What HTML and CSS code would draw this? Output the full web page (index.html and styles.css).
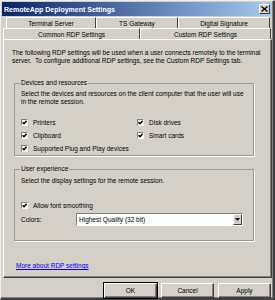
FILE: index.html
```html
<!DOCTYPE html>
<html>
<head>
<meta charset="utf-8">
<link rel="stylesheet" href="styles.css">
</head>
<body>
<div class="window">
  <div class="titlebar">
    <span class="title">RemoteApp Deployment Settings</span>
    <span class="close"><svg width="7" height="6" viewBox="0 0 7 6"><path d="M0.5 0.5 L6.5 5.5 M6.5 0.5 L0.5 5.5" stroke="#000" stroke-width="1.3"/></svg></span>
  </div>
  <div class="tabs">
    <div class="tabrow back">
      <div class="tab t1">Terminal Server</div>
      <div class="tab t2">TS Gateway</div>
      <div class="tab t3">Digital Signature</div>
    </div>
    <div class="tabrow front">
      <div class="tab t4 selected">Common RDP Settings</div>
      <div class="tab t5">Custom RDP Settings</div>
    </div>
  </div>
  <div class="panel">
    <p class="desc">The following RDP settings will be used when a user connects remotely to the terminal server.&nbsp; To configure additional RDP settings, see the Custom RDP Settings tab.</p>
    <fieldset class="group g1">
      <legend>Devices and resources</legend>
      <p class="gtext">Select the devices and resources on the client computer that the user will use in the remote session.</p>
      <div class="checks">
        <div class="col">
          <div class="check"><span class="box"></span>Printers</div>
          <div class="check"><span class="box"></span>Clipboard</div>
          <div class="check"><span class="box"></span>Supported Plug and Play devices</div>
        </div>
        <div class="col c2">
          <div class="check"><span class="box"></span>Disk drives</div>
          <div class="check"><span class="box"></span>Smart cards</div>
        </div>
      </div>
    </fieldset>
    <fieldset class="group g2">
      <legend>User experience</legend>
      <p class="gtext">Select the display settings for the remote session.</p>
      <div class="check smooth"><span class="box"></span>Allow font smoothing</div>
      <div class="colors">
        <span class="clabel">Colors:</span>
        <div class="select"><span class="sval">Highest Quality (32 bit)</span><span class="arrow"><svg width="5" height="3" viewBox="0 0 5 3"><path d="M0 0 H5 L2.5 3 Z" fill="#000"/></svg></span></div>
      </div>
    </fieldset>
    <a class="link" href="#">More about RDP settings</a>
  </div>
  <div class="buttons">
    <div class="btn">OK</div>
    <div class="btn">Cancel</div>
    <div class="btn">Apply</div>
  </div>
</div>
</body>
</html>
```
FILE: styles.css
```css
html, body { margin: 0; padding: 0; }
body {
  width: 275px; height: 300px; overflow: hidden;
  background: #d4d0c8;
  font-family: "Liberation Sans", Arial, sans-serif;
  font-size: 6.5px;
  color: #000;
}
.window {
  box-sizing: border-box;
  width: 275px; height: 300px;
  background: #d4d0c8;
  border-top: 1px solid #eeeeee;
  border-left: 1px solid #eeeeee;
  border-right: 2px solid #404040;
  border-bottom: 2px solid #404040;
  box-shadow: inset -1px -1px 0 #808080;
  display: flex; flex-direction: column;
}
.titlebar {
  height: 14px;
  margin: 1px 1px 0 1px;
  background: linear-gradient(to right, #0a246a, #a6caf0);
  display: flex; align-items: center; justify-content: space-between;
  padding: 0 2px 0 2px;
}
.title { color: #fff; font-weight: bold; font-size: 7px; }
.close {
  box-sizing: border-box;
  width: 11px; height: 10px;
  background: #d4d0c8;
  border-top: 1px solid #fff; border-left: 1px solid #fff;
  border-right: 1px solid #404040; border-bottom: 1px solid #404040;
  display: flex; align-items: center; justify-content: center;
}
.tabs { display: flex; flex-direction: column; margin-top: 1px; }
.tabrow { display: flex; height: 11px; }
.tabrow.back { margin-left: 5px; }
.tabrow.front { margin-left: 2px; }
.tab {
  box-sizing: border-box;
  border-top: 1px solid #fff; border-left: 1px solid #fff;
  border-right: 1px solid #404040;
  display: flex; align-items: center; justify-content: center;
}
.t1 { width: 90px; } .t2 { width: 82px; } .t3 { width: 92px; }
.t4 { width: 137px; } .t5 { width: 131px; }
.panel {
  box-sizing: border-box;
  width: 269px; height: 239px;
  margin-left: 2px;
  border-top: 1px solid #fff; border-left: 1px solid #fff;
  border-right: 1px solid #404040; border-bottom: 1px solid #404040;
  box-shadow: inset -1px -1px 0 #808080;
  padding: 9px 0 0 8px;
  display: flex; flex-direction: column;
}
p { margin: 0; }
.desc { line-height: 8px; width: 252px; }
.group {
  margin: 14px 0 0 2px; padding: 0 0 0 6px;
  width: 240px; box-sizing: border-box;
  border: 1px solid #9c9a94;
  box-shadow: 1px 1px 0 #fff;
  min-inline-size: 0;
}
.group legend { padding: 0 1px; margin-left: -1px; line-height: 8px; }
.gtext { line-height: 8px; margin-top: 3px; width: 228px; }
.g1 { height: 77px; }
.checks { display: flex; margin-top: 12px; }
.col { display: flex; flex-direction: column; gap: 5px; width: 122px; }
.check { display: flex; align-items: center; height: 8px; }
.box {
  box-sizing: border-box;
  width: 7px; height: 7px; margin-right: 5px;
  background: #fff url("data:image/svg+xml;utf8,<svg xmlns='http://www.w3.org/2000/svg' width='5' height='5' viewBox='0 0 5 5'><path d='M0.5 2.2 L2 3.8 L4.6 0.8' stroke='black' stroke-width='1.4' fill='none'/></svg>") center/5px 5px no-repeat;
  border-top: 1px solid #808080; border-left: 1px solid #808080;
  border-right: 1px solid #fff; border-bottom: 1px solid #fff;
}
.g2 { margin-top: 9px; height: 76px; }
.g2 .gtext { margin-top: 4px; }
.smooth { margin-top: 16px; }
.colors { display: flex; align-items: center; margin-top: 4px; }
.clabel { width: 55px; }
.select {
  box-sizing: border-box;
  width: 167px; height: 13px;
  background: #fff;
  border-top: 1px solid #808080; border-left: 1px solid #808080;
  border-right: 1px solid #fff; border-bottom: 1px solid #fff;
  display: flex; align-items: center; justify-content: space-between;
  padding-left: 2px;
}
.arrow {
  box-sizing: border-box; width: 9px; height: 11px;
  background: #d4d0c8;
  border-top: 1px solid #fff; border-left: 1px solid #fff;
  border-right: 1px solid #404040; border-bottom: 1px solid #404040;
  display: flex; align-items: center; justify-content: center;
}
.link { color: #0000ee; text-decoration: underline; margin: 21px 0 0 4px; }
.buttons { display: flex; justify-content: flex-end; gap: 4px; margin: 5px 2px 0 0; }
.btn {
  box-sizing: border-box; width: 53px; height: 15px;
  border-top: 1px solid #fff; border-left: 1px solid #fff;
  border-right: 1px solid #404040; border-bottom: 1px solid #404040;
  box-shadow: inset -1px -1px 0 #808080;
  display: flex; align-items: center; justify-content: center;
}
.btn:first-child { outline: 1px solid #000; outline-offset: 0; }
```
